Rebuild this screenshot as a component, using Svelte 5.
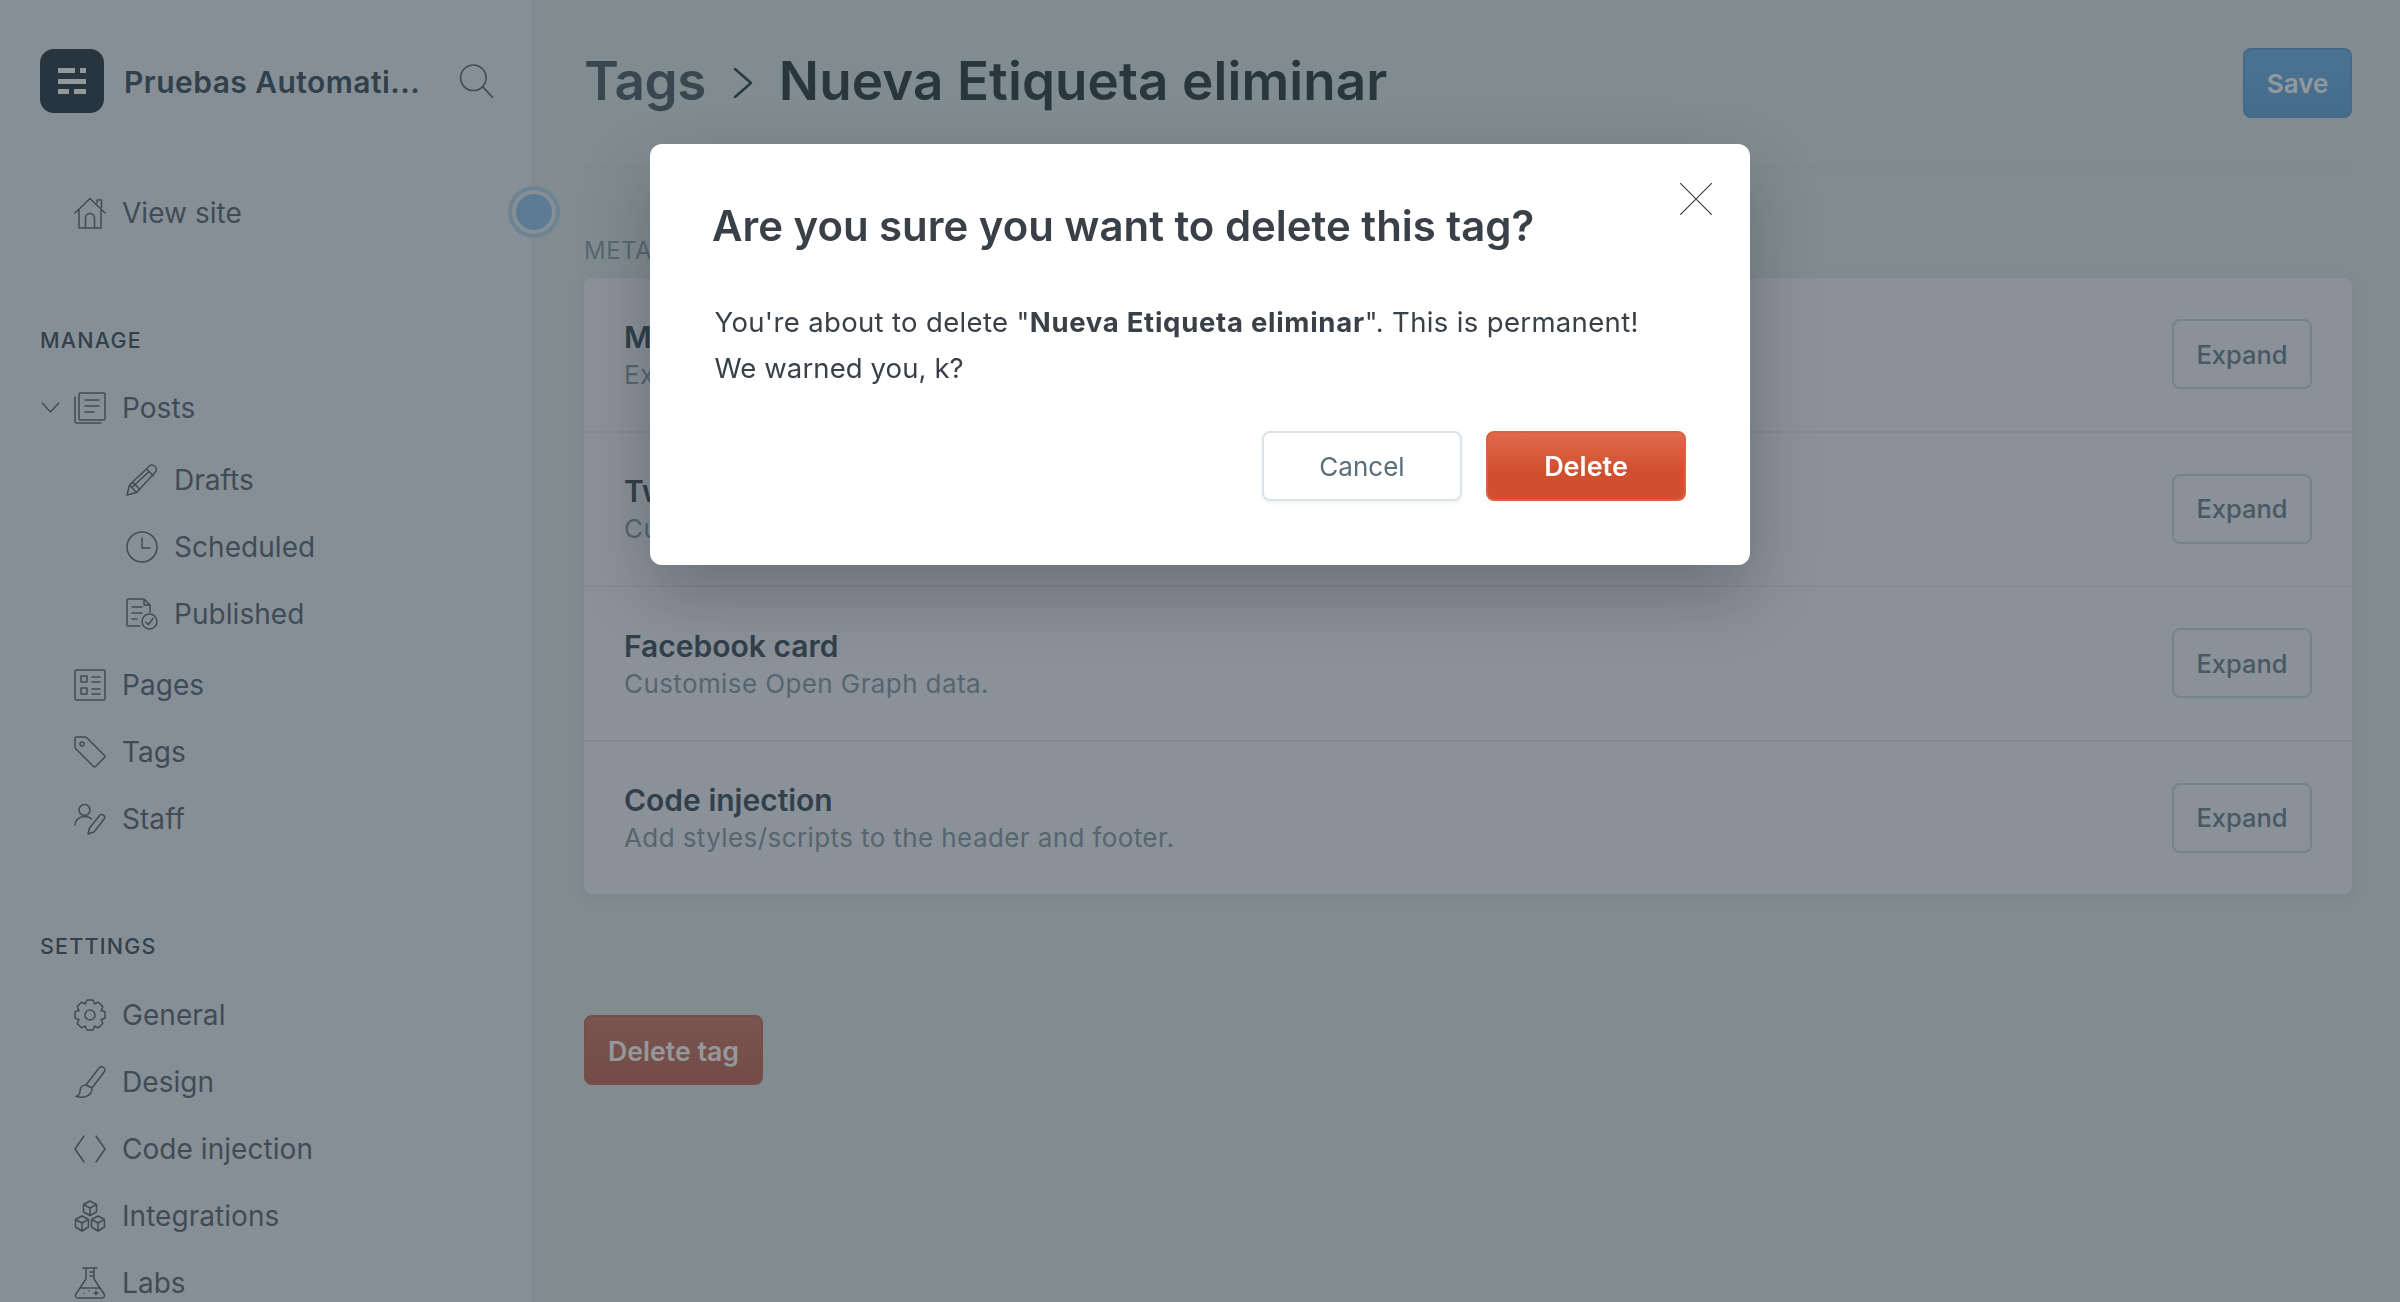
<script>
  const manage = [
    { id: 'pages', label: 'Pages' },
    { id: 'tags', label: 'Tags' },
    { id: 'staff', label: 'Staff' }
  ];
  const posts = [
    { id: 'drafts', label: 'Drafts' },
    { id: 'scheduled', label: 'Scheduled' },
    { id: 'published', label: 'Published' }
  ];
  const settings = [
    { id: 'general', label: 'General' },
    { id: 'design', label: 'Design' },
    { id: 'code', label: 'Code injection' },
    { id: 'integrations', label: 'Integrations' },
    { id: 'labs', label: 'Labs' }
  ];
  const cards = [
    { title: 'Meta data', desc: 'Extra content for search engines.' },
    { title: 'Twitter card', desc: 'Customise structured data for Twitter.' },
    { title: 'Facebook card', desc: 'Customise Open Graph data.' },
    { title: 'Code injection', desc: 'Add styles/scripts to the header and footer.' }
  ];

  // eight-tooth cog outline for the General icon
  function cogPath() {
    const pts = [];
    for (let i = 0; i < 8; i++) {
      const a = (i * Math.PI) / 4;
      for (const [r, d] of [[12, -0.42], [15.3, -0.2], [15.3, 0.2], [12, 0.42]]) {
        pts.push(`${(16 + r * Math.sin(a + d)).toFixed(1)} ${(16 - r * Math.cos(a + d)).toFixed(1)}`);
      }
    }
    return 'M' + pts.join('L') + 'Z';
  }
  const cog = cogPath();
</script>

{#snippet icon(id)}
  <svg class="icon" viewBox="0 0 32 32" fill="none" stroke="currentColor" stroke-width="1.500" stroke-linecap="round" stroke-linejoin="round">
    {#if id === 'home'}
      <path d="M1 16 16 1.500 31 16M5 13v18h22V13M11.500 31V21a4.500 4.500 0 0 1 9 0v10M23 6V3h4.500v7.500" />
    {:else if id === 'posts'}
      <rect x="5" y="1" width="26" height="27" rx="1.500" />
      <path d="M1 5v24.500A1.500 1.500 0 0 0 2.500 31H27M11 8h14M11 14h14M11 20h9" />
    {:else if id === 'drafts'}
      <path d="M1 31 3.500 21 23 2.500a3.700 3.700 0 0 1 6 0 4 4 0 0 1 0 6L10.500 28.500ZM3.500 21l7 7.500M6.500 18l7.500 7.500M20.500 5l7 7M23 7.500l-17 16" />
    {:else if id === 'scheduled'}
      <circle cx="16" cy="16" r="15" />
      <path d="M16 7v10h8" />
    {:else if id === 'published'}
      <path d="M14 28H2a1 1 0 0 1-1-1V2a1 1 0 0 1 1-1h16l6 6v7M18 1v6h6M6 9h10M6 15h10M6 21h5" />
      <circle cx="23.500" cy="23.500" r="7.500" />
      <path d="m19.500 24 3 2.500 4.500-6" />
    {:else if id === 'pages'}
      <rect x="1" y="1" width="30" height="30" rx="1.500" />
      <path d="M7 7h6v6H7zM7 19h6v6H7zM18 8h8M18 13h8M18 20h8M18 25h8" />
    {:else if id === 'tags'}
      <path d="M1 2.500A1.500 1.500 0 0 1 2.500 1H11a3 3 0 0 1 2 1l17.500 17.500a1.500 1.500 0 0 1 0 2l-9 9a1.500 1.500 0 0 1-2 0L2 13a3 3 0 0 1-1-2Z" />
      <circle cx="8" cy="8" r="2" />
    {:else if id === 'staff'}
      <circle cx="10.500" cy="7" r="5.500" />
      <path d="M1 22c0-5 4-8.500 9.500-8.500 3 0 5.500 1 7 2.500M14 31l1.500-6L26 12a3 3 0 0 1 4.500 3.500L20 29Z" />
    {:else if id === 'general'}
      <path d={cog} />
      <circle cx="16" cy="16" r="5" />
    {:else if id === 'design'}
      <path d="M12 19 25 2c1-1.300 3-1.500 4.500-.5 1.500 1 1.600 3 .6 4.500L18 22ZM12 19c-5 0-6 4-6 6 0 3-1.500 4.500-4 5.500 6 1.500 16 1 16-8.500" />
    {:else if id === 'code'}
      <path d="M10 3 1 16l9 13M22 3l9 13-9 13" />
    {:else if id === 'integrations'}
      <path d="m16 1 6.500 3.500v7.500L16 15.500 9.500 12V4.500ZM9.500 4.500 16 8l6.500-3.500M16 8v7.500M8 16l6.500 3.500V27L8 31l-6.500-4v-7.500ZM1.500 19.500 8 23l6.500-3.500M8 23v8M24 16l6.500 3.500V27L24 31l-6.500-4v-7.500ZM17.500 19.500 24 23l6.500-3.500M24 23v8" />
    {:else if id === 'labs'}
      <path d="M9 1h14M12 1v11L2 27c-1.300 2 0 4 2 4h24c2 0 3.300-2 2-4L20 12V1M20 5h-4M20 9h-4M6 21h20M10 26h.1M20 26h4M22 24v4M15 24h.1" />
    {/if}
  </svg>
{/snippet}

<div class="page">
  <aside class="sidebar">
    <div class="brand">
      <svg class="logo" viewBox="0 0 64 64">
        <rect width="64" height="64" rx="14" fill="#27394a" />
        <path fill="#fff" d="M18 19h17v5H18zM40 19h6v5h-6zM18 30h28v5H18zM18 40h11v5H18zM34 40h12v5H34z" />
      </svg>
      <span class="brand-name">Pruebas Automati...</span>
      <svg class="search" viewBox="0 0 32 32" fill="none" stroke="currentColor" stroke-width="1.500" stroke-linecap="round">
        <circle cx="13.500" cy="13" r="12" />
        <path d="m22.500 21.500 9 10" />
      </svg>
    </div>

    <div class="nav-item view-site">{@render icon('home')}<span>View site</span></div>

    <h4 class="nav-label manage">MANAGE</h4>
    <div class="nav-item">
      <svg class="chevron" viewBox="0 0 20 12" fill="none" stroke="currentColor" stroke-width="1.500" stroke-linecap="round" stroke-linejoin="round"><path d="m1 1 9 10 9-10" /></svg>
      {@render icon('posts')}<span>Posts</span>
    </div>
    <div class="sub-list">
      {#each posts as item}
        <div class="nav-item sub">{@render icon(item.id)}<span>{item.label}</span></div>
      {/each}
    </div>
    {#each manage as item}
      <div class="nav-item">{@render icon(item.id)}<span>{item.label}</span></div>
    {/each}

    <h4 class="nav-label settings">SETTINGS</h4>
    {#each settings as item}
      <div class="nav-item">{@render icon(item.id)}<span>{item.label}</span></div>
    {/each}

    <div class="pulse"></div>
  </aside>

  <main class="content">
    <header class="top">
      <h1><span class="crumb">Tags</span>
        <svg class="crumb-arrow" viewBox="0 0 20 32" fill="none" stroke="currentColor" stroke-width="2.400" stroke-linecap="round" stroke-linejoin="round"><path d="m2 2 16 14L2 30" /></svg>
        <span class="current">Nueva Etiqueta eliminar</span></h1>
      <button class="save">Save</button>
    </header>

    <p class="section-title">METADATA</p>
    <section class="card">
      {#each cards as card}
        <div class="card-row">
          <div>
            <h3>{card.title}</h3>
            <p>{card.desc}</p>
          </div>
          <button class="expand">Expand</button>
        </div>
      {/each}
    </section>

    <button class="delete-tag">Delete tag</button>
  </main>
</div>

<div class="backdrop">
  <div class="modal">
    <svg class="close" viewBox="0 0 32 32" fill="none" stroke="#394047" stroke-width="1.200"><path d="m0 0 32 32M32 0 0 32" /></svg>
    <h2>Are you sure you want to delete this tag?</h2>
    <p class="msg">You're about to delete "<strong>Nueva Etiqueta eliminar</strong>". This is permanent!<br /><span class="warned">We warned you, k?</span></p>
    <div class="actions">
      <button class="cancel">Cancel</button>
      <button class="confirm">Delete</button>
    </div>
  </div>
</div>

<style>
  :global(body) {
    font-family: Inter, "Noto Sans", sans-serif;
    color: #394047;
  }

  .page {
    display: flex;
    height: 100vh;
    overflow: hidden;
    background: #dae6ea;
  }

  .sidebar {
    position: relative;
    box-sizing: border-box;
    flex: 0 0 534px;
    padding: 49px 0 0 40px;
    background: #e6ecf4;
    border-right: 2px solid #d4dfe6;
    color: #566674;
  }

  .brand {
    display: flex;
    align-items: center;
    height: 64px;
    margin-bottom: 66px;
  }

  .logo {
    width: 64px;
    height: 64px;
    margin-right: 20px;
  }

  .brand-name {
    position: relative;
    top: 1px;
    font-size: 30px;
    font-weight: 600;
    letter-spacing: 0.45px;
    color: #3c4f5e;
  }

  .search {
    width: 34px;
    height: 34px;
    margin-left: 39px;
  }

  .nav-item {
    position: relative;
    display: flex;
    align-items: center;
    height: 67px;
    padding-left: 82px;
    font-size: 28px;
    letter-spacing: 0.05px;
  }

  .nav-item.sub {
    padding-left: 134px;
  }

  .icon {
    position: absolute;
    left: 34px;
    width: 32px;
    height: 32px;
  }

  .sub .icon {
    left: 86px;
  }

  .chevron {
    position: absolute;
    left: 1px;
    width: 19px;
    height: 11px;
  }

  .nav-label {
    margin: 74px 0 14px;
    height: 40px;
    line-height: 40px;
    font-size: 21.500px;
    font-weight: 500;
    letter-spacing: 1.200px;
    color: #3c4f5e;
  }

  .nav-label.settings {
    margin-bottom: 15px;
  }

  .sub-list {
    margin: 5px 0 4px;
  }

  .pulse {
    position: absolute;
    left: 516px;
    top: 194px;
    width: 36px;
    height: 36px;
    border-radius: 50%;
    background: #8ec4f0;
    box-shadow: 0 0 0 4px #e6ecf4, 0 0 0 8px #b0d4ee;
  }

  .content {
    flex: 1;
    padding: 0 48px 0 50px;
    min-width: 0;
  }

  .top {
    display: flex;
    align-items: center;
    justify-content: space-between;
    box-sizing: border-box;
    height: 169px;
    padding-bottom: 1px;
    border-bottom: 2px solid #d2e0e6;
  }

  h1 {
    display: flex;
    align-items: center;
    margin: -4px 0 0;
    font-size: 53px;
    font-weight: 600;
    color: #2b3a44;
  }

  .crumb {
    letter-spacing: -0.5px;
    color: #4a5c68;
  }

  .crumb-arrow {
    width: 20px;
    height: 32px;
    margin: 4px 26px 0 27px;
  }

  .current {
    letter-spacing: 0.1px;
  }

  button {
    font-family: inherit;
    box-sizing: border-box;
    height: 70px;
    padding: 0;
    border-radius: 8px;
    font-size: 26px;
  }

  .save {
    width: 109px;
    border: 2px solid #5f9fd8;
    background: linear-gradient(#72b4ec, #62a6e0);
    color: #fff;
    font-weight: 600;
  }

  .section-title {
    margin: 0;
    padding-top: 69px;
    height: 40px;
    line-height: 26px;
    font-size: 24px;
    letter-spacing: 0.5px;
    color: #8c9ea8;
  }

  .card {
    box-sizing: border-box;
    height: 616px;
    background: #ecf0fa;
    border-radius: 8px;
    box-shadow: 0 4px 14px rgba(40, 50, 70, 0.08);
  }

  .card-row {
    display: flex;
    align-items: center;
    justify-content: space-between;
    box-sizing: border-box;
    height: 154.500px;
    padding: 0 40px;
    border-bottom: 2px solid #dde5ee;
  }

  .card-row:last-child {
    border-bottom-color: transparent;
  }

  h3 {
    margin: 0 0 4px;
    font-size: 30px;
    font-weight: 600;
    color: #3c4f5e;
  }

  .card-row p {
    margin: 0;
    font-size: 26px;
    letter-spacing: 0.4px;
    color: #8599a5;
  }

  .expand {
    width: 140px;
    border: 2px solid #c6d4dc;
    background: transparent;
    font-size: 25.500px;
    color: #6a8090;
    font-weight: 500;
  }

  .delete-tag {
    display: block;
    width: 179px;
    margin-top: 121px;
    padding-top: 2px;
    border: 2px solid #c06a5a;
    background: linear-gradient(#cc7768, #c06455);
    font-size: 26.700px;
    color: #fff;
    font-weight: 600;
  }

  .backdrop {
    position: fixed;
    inset: 0;
    display: flex;
    justify-content: center;
    align-items: flex-start;
    padding-top: 144px;
    box-sizing: border-box;
    background: rgba(40, 50, 56, 0.5);
  }

  .modal {
    position: relative;
    box-sizing: border-box;
    width: 1100px;
    height: 421px;
    padding: 54px 64px 0 62px;
    background: #fff;
    border-radius: 12px;
    box-shadow: 0 30px 70px rgba(0, 0, 0, 0.22);
  }

  .close {
    position: absolute;
    top: 39px;
    right: 38px;
    width: 32px;
    height: 32px;
  }

  h2 {
    margin: 0 0 44.500px;
    font-size: 41.900px;
    line-height: 56px;
    font-weight: 600;
    color: #394047;
  }

  .msg {
    margin: 0 0 0 2.500px;
    font-size: 27.500px;
    line-height: 46px;
    letter-spacing: 0.35px;
    color: #394047;
  }

  .msg strong {
    font-weight: 700;
    letter-spacing: 0.72px;
  }

  .warned {
    letter-spacing: 0.1px;
  }

  .actions {
    display: flex;
    justify-content: flex-end;
    gap: 24px;
    margin-top: 40.500px;
  }

  .cancel {
    width: 200px;
    border: 2px solid #dae3e8;
    background: #fff;
    color: #5a6d78;
    box-shadow: 0 2px 4px rgba(0, 0, 0, 0.06);
  }

  .confirm {
    width: 200px;
    border: 2px solid #de5f42;
    background: linear-gradient(#e0694c, #cf4f2e 60%);
    font-size: 27px;
    color: #fff;
    font-weight: 600;
  }
</style>
